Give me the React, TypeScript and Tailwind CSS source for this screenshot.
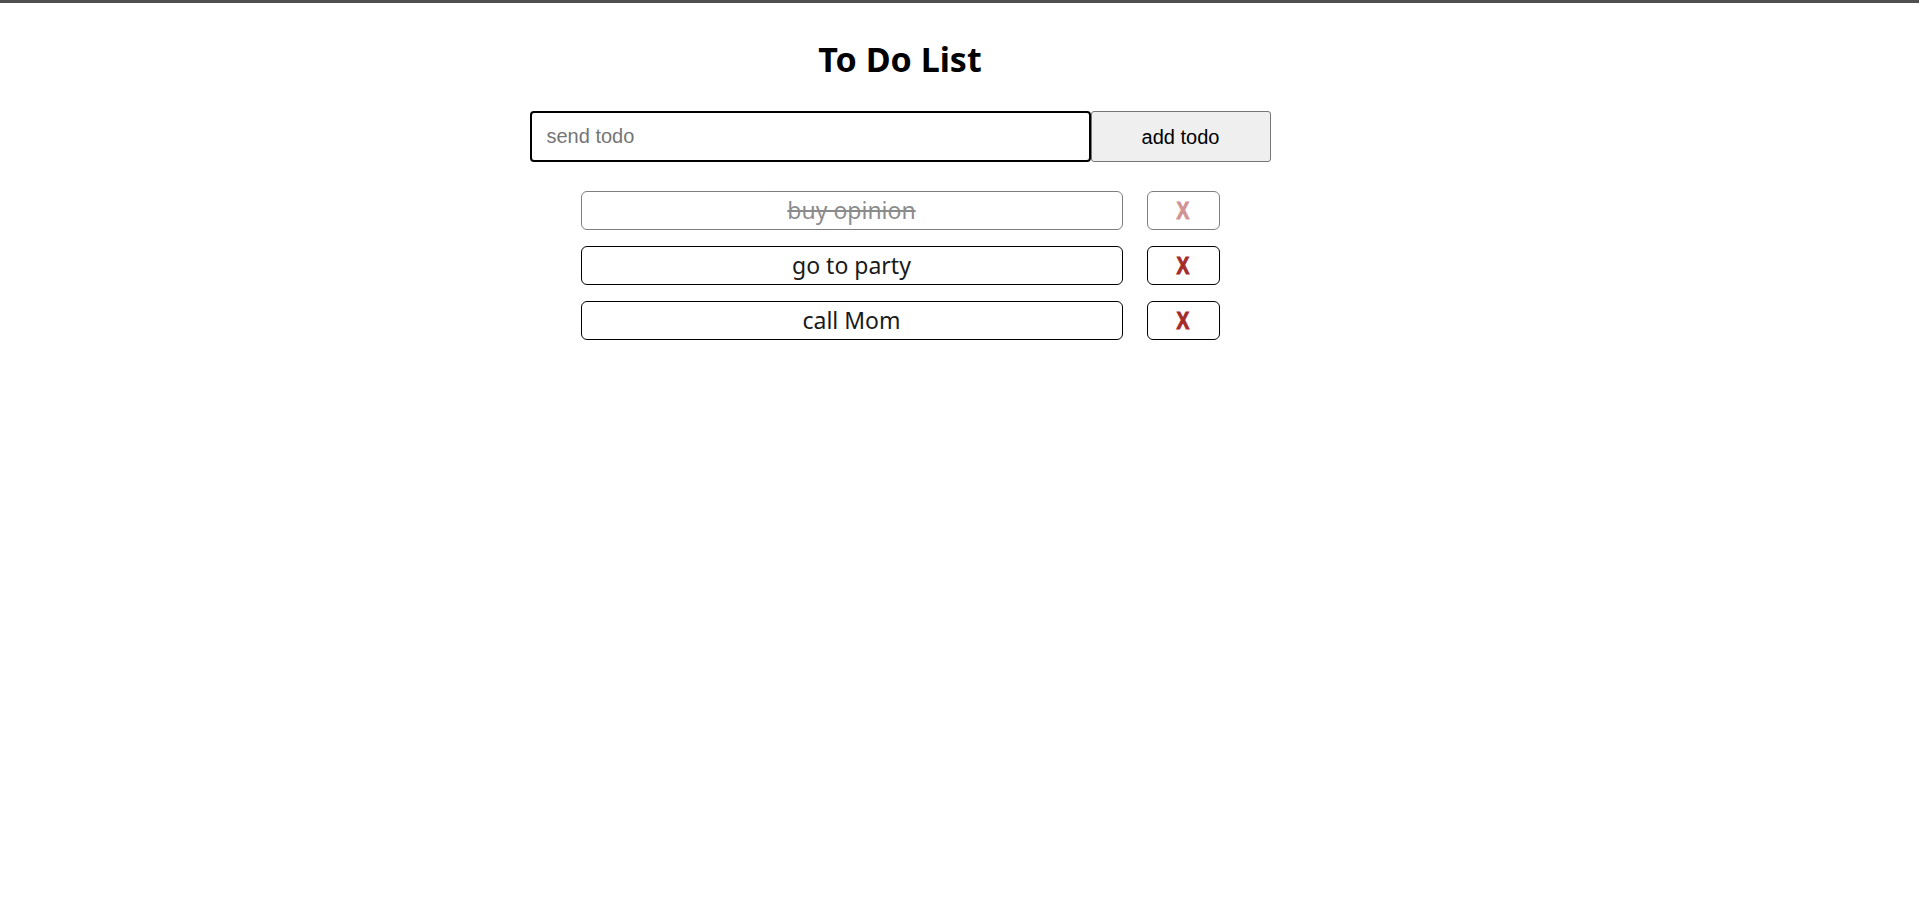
import React from "react";

const todos = [
  { text: "buy opinion", done: true },
  { text: "go to party", done: false },
  { text: "call Mom", done: false },
];

export default function App() {
  return (
    <div className="min-h-[901px] bg-white">
      <div className="h-[3px] bg-[#4f4f4f]" />
      <div className="w-[1800px] flex flex-col items-center">
        <h1 className="mt-[35px] text-[34px] leading-[43px] font-bold text-black [font-family:'Noto_Sans',sans-serif]">
          To Do List
        </h1>
        <form className="mt-[30px] flex" onSubmit={(e) => e.preventDefault()}>
          <input
            autoFocus
            placeholder="send todo"
            className="w-[561px] h-[51px] border-2 border-black rounded-[4px] px-[15px] text-[20px] text-black placeholder:text-[#757575] outline-none [font-family:'Liberation_Sans',Arial,sans-serif]"
          />
          <button
            type="button"
            className="w-[180px] h-[51px] bg-[#efefef] border border-[#767676] rounded-[3px] text-[20px] text-black [font-family:'Liberation_Sans',Arial,sans-serif]"
          >
            add todo
          </button>
        </form>
        <ul className="mt-[29px] flex flex-col gap-[16px]">
          {todos.map((t) => (
            <li
              key={t.text}
              className={`flex items-center gap-[24px] ${t.done ? "opacity-50" : ""}`}
            >
              <div
                className={`w-[542px] h-[39px] border border-black rounded-[6px] flex items-center justify-center text-[23px] text-[#1a1a1a] [font-family:'Noto_Sans',sans-serif] ${
                  t.done ? "line-through" : ""
                }`}
              >
                {t.text}
              </div>
              <button
                type="button"
                className="w-[73px] h-[39px] border border-black rounded-[6px] flex items-center justify-center text-[24px] font-bold text-[#a52a2a] [-webkit-text-stroke:1px_#a52a2a] [font-family:'Liberation_Sans',Arial,sans-serif]"
              >
                <span className="inline-block scale-x-[0.8]">X</span>
              </button>
            </li>
          ))}
        </ul>
      </div>
    </div>
  );
}
